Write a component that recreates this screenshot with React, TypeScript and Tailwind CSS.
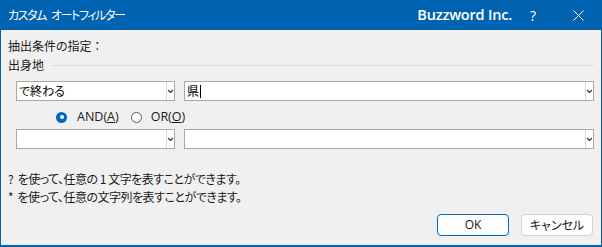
import type { ReactNode } from "react";

const jp = "font-['Segoe_UI','Noto_Sans_CJK_JP',sans-serif] [font-feature-settings:'palt']";

function Chevron() {
  return (
    <svg width="7" height="5" viewBox="0 0 7 5" className="block">
      <polyline points="1,1 3.5,3.5 6,1" fill="none" stroke="#333" strokeWidth="1.1" />
    </svg>
  );
}

function Combo({ width, children, caret }: { width?: string; children?: ReactNode; caret?: boolean }) {
  return (
    <div className={`flex h-[20px] items-stretch border border-[#a8a8a8] bg-white ${width ?? "flex-1"}`}>
      <div className="flex flex-1 items-center pl-[2px] text-[12px] leading-none text-black">
        {children}
        {caret ? <span className="ml-[1px] inline-block h-[13px] w-[1px] bg-black" /> : null}
      </div>
      <div className="flex w-[8px] items-center justify-center border-l border-[#dadada]">
        <Chevron />
      </div>
    </div>
  );
}

function Radio({ checked }: { checked?: boolean }) {
  return checked ? (
    <span className="flex h-[11px] w-[11px] shrink-0 items-center justify-center rounded-full bg-[#0067c0]">
      <span className="block h-[4px] w-[4px] rounded-full bg-white" />
    </span>
  ) : (
    <span className="block h-[11px] w-[11px] shrink-0 rounded-full border border-[#5a5a5a] bg-white" />
  );
}

export default function App() {
  return (
    <div className={`flex h-[247px] w-[602px] flex-col bg-[#0063b1] px-[1px] pb-[2px] ${jp}`}>
      {/* Title bar */}
      <div className="flex h-[30px] shrink-0 items-center text-white">
        <span className="ml-[7px] text-[12px] tracking-[-1.4px]">カスタム</span>
        <span className="ml-[5px] text-[12px] tracking-[-1.4px]">オートフィルター</span>
        <span className="ml-auto font-['Open_Sans',sans-serif] text-[14.5px] font-semibold tracking-[-0.2px]">
          Buzzword Inc.
        </span>
        <span className="ml-[18px] font-['Open_Sans',sans-serif] text-[14px]">?</span>
        <svg width="11" height="11" viewBox="0 0 11 11" className="ml-[37px] mr-[17px]">
          <path d="M0.5 0.5 L10.5 10.5 M10.5 0.5 L0.5 10.5" stroke="white" strokeWidth="1" />
        </svg>
      </div>

      {/* Body */}
      <div className="flex flex-1 flex-col bg-[#f0f0f0] pl-[7px] pr-[7px] text-[12px] text-[#1a1a1a]">
        <div className="mt-[8px] h-[16px] leading-[16px]">抽出条件の指定 ：</div>
        <div className="mt-[3px] flex h-[16px] items-center leading-[16px]">
          <span>出身地</span>
          <span className="ml-[7px] h-[1px] flex-1 bg-[#dcdcdc]" />
        </div>

        <div className="ml-[8px] mt-[8px] flex gap-[9px]">
          <Combo width="w-[159px]">で終わる</Combo>
          <Combo caret>県</Combo>
        </div>

        <div className="ml-[48px] mt-[8px] flex h-[16px] items-center leading-[16px]">
          <Radio checked />
          <span className="ml-[10px] font-['Open_Sans',sans-serif] text-[12.5px]">
            AND(<span className="underline">A</span>)
          </span>
          <span className="ml-[12px] block">
            <Radio />
          </span>
          <span className="ml-[9px] font-['Open_Sans',sans-serif] text-[12.5px]">
            OR(<span className="underline">O</span>)
          </span>
        </div>

        <div className="ml-[8px] mt-[4px] flex gap-[9px]">
          <Combo width="w-[159px]" />
          <Combo />
        </div>

        <div className="mt-[22px] h-[16px] leading-[16px] tracking-[-0.5px]">?&nbsp; を使って、任意の 1 文字を表すことができます。</div>
        <div className="mt-[2px] h-[16px] leading-[16px] tracking-[-0.5px]">*&nbsp; を使って、任意の文字列を表すことができます。</div>

        <div className="mt-[9px] flex justify-end gap-[12px] pr-[1px]">
          <button className="h-[22px] w-[72px] rounded-[4px] border border-[#0067c0] bg-[#fdfdfd] font-['Open_Sans',sans-serif] text-[12px] text-[#1a1a1a]">
            OK
          </button>
          <button className="h-[22px] w-[72px] rounded-[4px] border border-[#d0d0d0] bg-[#fdfdfd] text-[12px] text-[#1a1a1a]">
            キャンセル
          </button>
        </div>
      </div>
    </div>
  );
}
